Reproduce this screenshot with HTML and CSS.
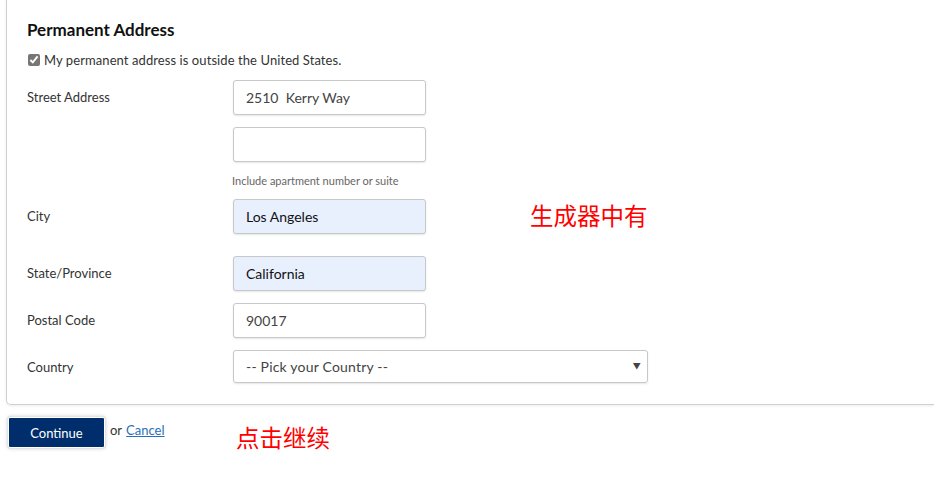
FILE: index.html
```html
<!DOCTYPE html>
<html lang="en">
<head>
<meta charset="utf-8">
<title>Permanent Address</title>
<link rel="stylesheet" href="styles.css">
</head>
<body>
<div class="page">
  <section class="card">
    <h2 class="title">Permanent Address</h2>
    <label class="check"><input type="checkbox" checked> My permanent address is outside the United States.</label>
    <div class="row">
      <div class="label">Street Address</div>
      <div class="fields">
        <div class="input">2510&nbsp; Kerry Way</div>
        <div class="input"></div>
        <div class="help">Include apartment number or suite</div>
      </div>
    </div>
    <div class="row">
      <div class="label">City</div>
      <div class="fields"><div class="input filled">Los Angeles</div></div>
    </div>
    <div class="row row-wide">
      <div class="label">State/Province</div>
      <div class="fields"><div class="input filled">California</div></div>
    </div>
    <div class="row">
      <div class="label">Postal Code</div>
      <div class="fields"><div class="input">90017</div></div>
    </div>
    <div class="row">
      <div class="label">Country</div>
      <div class="fields"><div class="select"><span>-- Pick your Country --</span><span class="arrow">&#9660;</span></div></div>
    </div>
    <div class="note note-gen">生成器中有</div>
  </section>
  <div class="actions">
    <button class="btn">Continue</button>
    <span class="or">or</span>
    <a class="cancel" href="#">Cancel</a>
    <div class="note note-click">点击继续</div>
  </div>
</div>
</body>
</html>
```
FILE: styles.css
```css
* { box-sizing: border-box; }
html, body { margin: 0; padding: 0; background: #fff; }
body {
  font-family: Lato, "Open Sans", "Noto Sans CJK SC", sans-serif;
  color: #333;
  font-size: 13px;
  width: 934px;
  height: 483px;
  overflow: hidden;
}
.page { position: relative; width: 934px; padding-bottom: 30px; }
.card {
  position: relative;
  margin-left: 6px;
  border: 1px solid #d0d0d0;
  border-top: 0;
  border-right: 0;
  border-radius: 0 0 0 5px;
  box-shadow: 0 1px 3px rgba(0,0,0,0.08);
  padding: 18px 0 19px 20px;
}
.title {
  margin: 0;
  font-size: 17px;
  line-height: 24px;
  font-weight: 700;
  color: #111;
}
.check {
  display: flex;
  align-items: center;
  gap: 4px;
  margin-top: 9px;
  line-height: 18px;
  font-size: 13px;
  letter-spacing: 0.08px;
  color: #333;
}
.check input {
  margin: 0 0 0 1px;
  width: 12px;
  height: 12px;
  accent-color: #777;
}
.row {
  display: grid;
  grid-template-columns: 206px 1fr;
  margin-top: 12px;
}
.row:first-of-type { margin-top: 11px; }
.row-wide { margin-top: 22px; }
.label {
  line-height: 35px;
  font-size: 13px;
  color: #333;
}
.fields {
  display: flex;
  flex-direction: column;
  gap: 12px;
}
.input {
  width: 193px;
  height: 35px;
  border: 1px solid #c8c8c8;
  border-radius: 3px;
  box-shadow: 0 1px 2px rgba(0,0,0,0.1);
  padding: 0 12px;
  line-height: 33px;
  font-size: 14px;
  color: #444;
  background: #fff;
}
.input.filled { background: #e8f0fe; color: #111; }
.help {
  margin-left: -1px;
  margin-bottom: -1px;
  font-size: 11px;
  line-height: 14px;
  color: #666;
}
.select {
  width: 415px;
  height: 33px;
  border: 1px solid #c8c8c8;
  border-radius: 3px;
  box-shadow: 0 1px 2px rgba(0,0,0,0.1);
  padding: 0 6px 0 12px;
  line-height: 31px;
  font-size: 14px;
  letter-spacing: 0.2px;
  color: #444;
  display: flex;
  justify-content: space-between;
}
.arrow { font-size: 8px; color: #444; }
.actions {
  position: relative;
  margin-top: 12px;
  margin-left: 8px;
  display: flex;
  align-items: flex-start;
}
.btn {
  width: 97px;
  height: 31px;
  border: 1px solid #fff;
  outline: 1px solid #e4e4e4;
  background: #002e6d;
  color: #fff;
  font-family: Lato, sans-serif;
  font-size: 13px;
  border-radius: 2px;
  box-shadow: 0 0 4px rgba(0,0,0,0.25);
  padding: 0;
}
.or { margin-left: 5px; line-height: 26px; font-size: 13px; color: #333; }
.cancel { margin-left: 4px; line-height: 26px; font-size: 13px; color: #2a6ebb; }
.note {
  position: absolute;
  color: #f00;
  font-size: 23.5px;
  line-height: 28px;
  font-family: "Noto Sans CJK SC", sans-serif;
  white-space: nowrap;
}
.note-gen { left: 523px; top: 201px; }
.note-click { left: 228px; top: 6px; }
```
